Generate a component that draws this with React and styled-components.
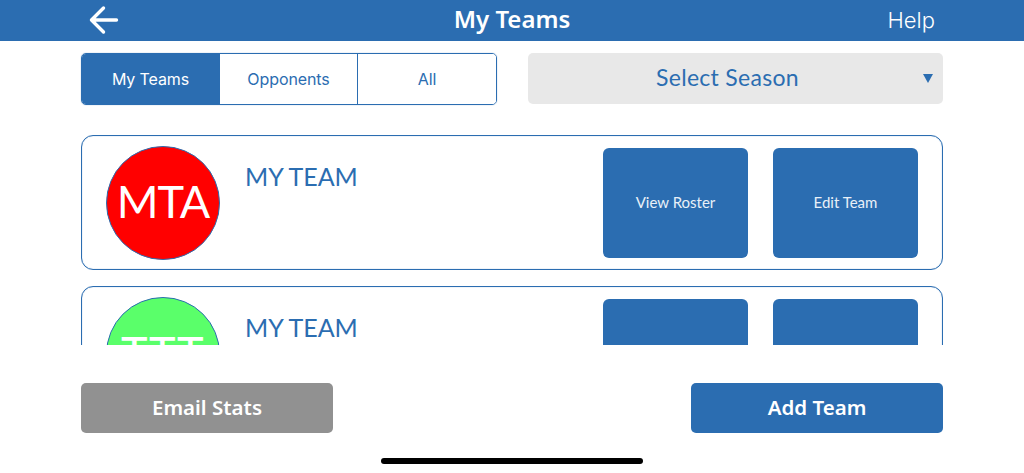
import React from 'react'
import styled, { createGlobalStyle } from 'styled-components'

const blue = '#2b6db1'

const GlobalStyle = createGlobalStyle`
	html, body {
		margin: 0;
		padding: 0;
		background: #fff;
		font-family: 'Lato', 'Liberation Sans', sans-serif;
	}
`

const Page = styled.div`
	width: 1024px;
	height: 473px;
	display: flex;
	flex-direction: column;
	overflow: hidden;
	background: #fff;
`

const Header = styled.header`
	height: 41px;
	flex: none;
	display: grid;
	grid-template-columns: 1fr auto 1fr;
	align-items: center;
	padding: 0 89px;
	background: ${blue};
	color: #fff;
`

const BackButton = styled.button`
	justify-self: start;
	display: flex;
	padding: 0;
	margin-bottom: 1px;
	border: 0;
	background: none;
	color: #fff;
`

const Title = styled.h1`
	margin: 0 0 4px;
	font-family: 'Noto Sans', sans-serif;
	font-size: 24px;
	font-weight: 600;
	line-height: 34px;
`

const HelpLink = styled.span`
	justify-self: end;
	margin-bottom: 2px;
	font-family: 'Inter', sans-serif;
	font-size: 22px;
	font-weight: 300;
	line-height: 36px;
`

const FilterRow = styled.div`
	display: flex;
	justify-content: space-between;
	margin: 12px 81px 0;
`

const Segments = styled.div`
	width: 416px;
	height: 52px;
	box-sizing: border-box;
	display: flex;
	border: 1px solid ${blue};
	border-radius: 5px;
	box-shadow: 0 0 1px rgba(43, 109, 177, 0.7);
	overflow: hidden;
`

const Segment = styled.div`
	width: ${(p) => p.$width}px;
	flex: none;
	box-sizing: border-box;
	display: flex;
	align-items: center;
	justify-content: center;
	font-family: 'Inter', sans-serif;
	font-size: 16px;
	letter-spacing: -0.1px;
	color: ${(p) => (p.$active ? '#fff' : blue)};
	background: ${(p) => (p.$active ? blue : '#fff')};

	& + & {
		border-left: 1px solid ${blue};
	}
`

const SeasonSelect = styled.div`
	position: relative;
	width: 415px;
	height: 51px;
	box-sizing: border-box;
	display: flex;
	align-items: center;
	justify-content: center;
	padding: 0 16px 4px 0;
	border-radius: 5px;
	background: #e8e8e8;
	color: ${blue};
	font-size: 23px;
	letter-spacing: 0.3px;
`

const Caret = styled.span`
	position: absolute;
	right: 10px;
	top: 21px;
	width: 0;
	height: 0;
	border-left: 5px solid transparent;
	border-right: 5px solid transparent;
	border-top: 9px solid ${blue};
`

const TeamList = styled.div`
	height: 210px;
	flex: none;
	display: flex;
	flex-direction: column;
	gap: 16px;
	margin: 30px 81px 0;
	overflow: hidden;
`

const TeamCard = styled.div`
	flex: none;
	height: 135px;
	box-sizing: border-box;
	display: flex;
	align-items: center;
	padding: 0 24px;
	border: 1px solid ${blue};
	border-radius: 12px;
	box-shadow: inset 0 0 1px rgba(43, 109, 177, 0.7);
`

const Avatar = styled.div`
	flex: none;
	width: 114px;
	height: 114px;
	box-sizing: border-box;
	display: flex;
	align-items: center;
	justify-content: center;
	padding-bottom: 3px;
	border: 1px solid ${blue};
	border-radius: 50%;
	background: ${(p) => p.$color};
	color: #fff;
	font-size: 45px;
	letter-spacing: ${(p) => p.$spacing};
`

const TeamName = styled.div`
	flex: 1;
	align-self: flex-start;
	margin: 24px 0 0 25px;
	font-size: 25px;
	line-height: 32px;
	color: ${blue};
`

const ActionButton = styled.button`
	width: 145px;
	height: 110px;
	padding: 0 0 2px;
	margin-left: 25px;
	border: 0;
	border-radius: 6px;
	background: ${blue};
	color: #e8f0f8;
	font-family: 'Lato', sans-serif;
	font-size: 15px;
`

const Footer = styled.div`
	display: flex;
	justify-content: space-between;
	margin: 38px 81px 0;
`

const FooterButton = styled.button`
	width: 252px;
	height: 50px;
	padding: 0 0 2px;
	border: 0;
	border-radius: 5px;
	background: ${(p) => p.$color};
	color: #fff;
	font-family: 'Noto Sans', sans-serif;
	font-size: 20.5px;
	font-weight: 600;
`

const HomeBar = styled.div`
	width: 262px;
	height: 6px;
	margin: 25px auto 0;
	border-radius: 3px;
	background: #000;
`

const teams = [
	{ id: 1, initials: 'MTA', color: '#ff0000', spacing: '-1px' },
	{ id: 2, initials: 'TTT', color: '#5aff6a', spacing: '1.5px' },
]

export default function App() {
	return (
		<Page>
			<GlobalStyle />
			<Header>
				<BackButton aria-label="Back">
					<svg width="30" height="30" viewBox="0 0 30 30" fill="none" stroke="currentColor" strokeWidth="3.4" strokeLinecap="round" strokeLinejoin="round">
						<path d="M2.5 15H27.5M14.5 3L2.5 15L14.5 27" />
					</svg>
				</BackButton>
				<Title>My Teams</Title>
				<HelpLink>Help</HelpLink>
			</Header>
			<FilterRow>
				<Segments>
					<Segment $active $width={137}>My Teams</Segment>
					<Segment $width={138}>Opponents</Segment>
					<Segment $width={139}>All</Segment>
				</Segments>
				<SeasonSelect>
					Select Season
					<Caret />
				</SeasonSelect>
			</FilterRow>
			<TeamList>
				{teams.map((team) => (
					<TeamCard key={team.id}>
						<Avatar $color={team.color} $spacing={team.spacing}>{team.initials}</Avatar>
						<TeamName>MY TEAM</TeamName>
						<ActionButton>View Roster</ActionButton>
						<ActionButton>Edit Team</ActionButton>
					</TeamCard>
				))}
			</TeamList>
			<Footer>
				<FooterButton $color="#919191">Email Stats</FooterButton>
				<FooterButton $color={blue}>Add Team</FooterButton>
			</Footer>
			<HomeBar />
		</Page>
	)
}
